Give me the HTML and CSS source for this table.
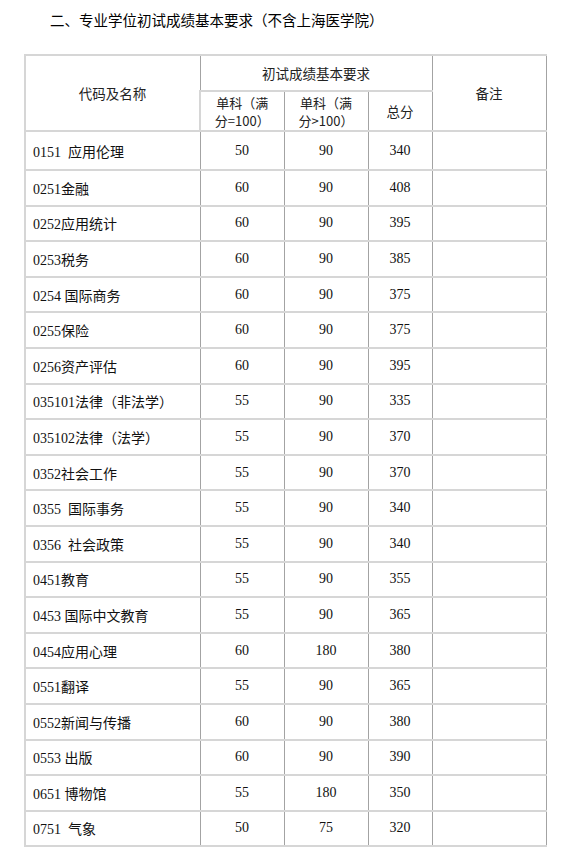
FILE: index.html
```html
<!DOCTYPE html>
<html lang="zh">
<head>
<meta charset="utf-8">
<link rel="stylesheet" href="styles.css">
</head>
<body>
<h2 class="title">二、专业学位初试成绩基本要求（不含上海医学院）</h2>
<table class="req">
  <colgroup>
    <col class="c-name"><col class="c-s1"><col class="c-s2"><col class="c-tot"><col class="c-note">
  </colgroup>
  <thead>
    <tr class="h1">
      <th rowspan="2">代码及名称</th>
      <th colspan="3">初试成绩基本要求</th>
      <th rowspan="2">备注</th>
    </tr>
    <tr class="h2">
      <th class="sub">单科（满<br>分=100）</th>
      <th class="sub">单科（满<br>分&gt;100）</th>
      <th>总分</th>
    </tr>
  </thead>
  <tbody>
    <tr class="first"><td>0151&nbsp; 应用伦理</td><td>50</td><td>90</td><td>340</td><td></td></tr>
    <tr><td>0251金融</td><td>60</td><td>90</td><td>408</td><td></td></tr>
    <tr><td>0252应用统计</td><td>60</td><td>90</td><td>395</td><td></td></tr>
    <tr><td>0253税务</td><td>60</td><td>90</td><td>385</td><td></td></tr>
    <tr><td>0254 国际商务</td><td>60</td><td>90</td><td>375</td><td></td></tr>
    <tr><td>0255保险</td><td>60</td><td>90</td><td>375</td><td></td></tr>
    <tr><td>0256资产评估</td><td>60</td><td>90</td><td>395</td><td></td></tr>
    <tr><td>035101法律（非法学）</td><td>55</td><td>90</td><td>335</td><td></td></tr>
    <tr><td>035102法律（法学）</td><td>55</td><td>90</td><td>370</td><td></td></tr>
    <tr><td>0352社会工作</td><td>55</td><td>90</td><td>370</td><td></td></tr>
    <tr><td>0355&nbsp; 国际事务</td><td>55</td><td>90</td><td>340</td><td></td></tr>
    <tr><td>0356&nbsp; 社会政策</td><td>55</td><td>90</td><td>340</td><td></td></tr>
    <tr><td>0451教育</td><td>55</td><td>90</td><td>355</td><td></td></tr>
    <tr><td>0453 国际中文教育</td><td>55</td><td>90</td><td>365</td><td></td></tr>
    <tr><td>0454应用心理</td><td>60</td><td>180</td><td>380</td><td></td></tr>
    <tr><td>0551翻译</td><td>55</td><td>90</td><td>365</td><td></td></tr>
    <tr><td>0552新闻与传播</td><td>60</td><td>90</td><td>380</td><td></td></tr>
    <tr><td>0553 出版</td><td>60</td><td>90</td><td>390</td><td></td></tr>
    <tr><td>0651 博物馆</td><td>55</td><td>180</td><td>350</td><td></td></tr>
    <tr><td>0751&nbsp; 气象</td><td>50</td><td>75</td><td>320</td><td></td></tr>
  </tbody>
</table>
</body>
</html>
```
FILE: styles.css
```css
html, body {
  margin: 0;
  padding: 0;
  background: #fff;
}
body {
  font-family: "Liberation Serif", "Noto Sans CJK SC", serif;
  color: #111;
}
.title {
  margin: 0;
  padding: 9px 0 0 50px;
  height: 54px;
  box-sizing: border-box;
  font-family: "Noto Sans CJK SC", sans-serif;
  font-size: 14.5px;
  font-weight: 400;
  line-height: 22px;
  color: #000;
}
.req {
  margin-left: 24px;
  border-collapse: collapse;
  table-layout: fixed;
  width: 521px;
  font-size: 14px;
}
.c-name { width: 175px; }
.c-s1 { width: 84px; }
.c-s2 { width: 84px; }
.c-tot { width: 64px; }
.c-note { width: 114px; }
.req th, .req td {
  border-left: 1px solid #a3a3a3;
  border-right: 1px solid #a3a3a3;
  border-top: 2px solid #d6d6d6;
  border-bottom: 2px solid #d6d6d6;
  padding: 0;
  text-align: center;
  vertical-align: middle;
  font-weight: 400;
  box-sizing: border-box;
}
.req tr > :first-child {
  border-left: 2px solid #d6d6d6;
}
.req th {
  font-family: "Noto Sans CJK SC", sans-serif;
  font-size: 13.5px;
  color: #222;
}
.req .h1 { height: 36px; }
.req .h2 { height: 39px; }
.req th.sub {
  font-size: 13px;
  line-height: 18px;
  padding-top: 2px;
}
.req tbody tr { height: 35.6px; }
.req tbody tr.first { height: 39px; }
.req td:first-child {
  text-align: left;
  padding-left: 7px;
}
```
